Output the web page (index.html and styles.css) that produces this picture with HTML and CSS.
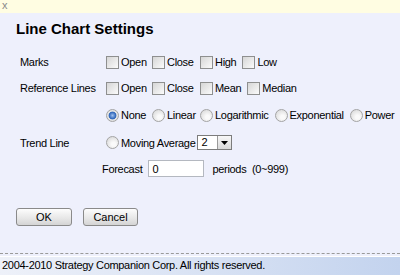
FILE: index.html
```html
<!DOCTYPE html>
<html lang="en">
<head>
  <meta charset="UTF-8">
  <title>Line Chart Settings</title>
  <link rel="stylesheet" href="styles.css">
</head>
<body>

  <div class="topbar">x</div>

  <main class="dialog">
    <h1>Line Chart Settings</h1>

    <div class="settings">
      <div class="label">Marks</div>
      <div class="options cols">
        <label class="opt"><input type="checkbox"><span>Open</span></label>
        <label class="opt"><input type="checkbox"><span>Close</span></label>
        <label class="opt"><input type="checkbox"><span>High</span></label>
        <label class="opt"><input type="checkbox"><span>Low</span></label>
      </div>

      <div class="label">Reference Lines</div>
      <div class="options cols">
        <label class="opt"><input type="checkbox"><span>Open</span></label>
        <label class="opt"><input type="checkbox"><span>Close</span></label>
        <label class="opt"><input type="checkbox"><span>Mean</span></label>
        <label class="opt"><input type="checkbox"><span>Median</span></label>
      </div>

      <div class="label"></div>
      <div class="options cols">
        <label class="opt"><input type="radio" name="trend" checked><span>None</span></label>
        <label class="opt"><input type="radio" name="trend"><span>Linear</span></label>
        <label class="opt"><input type="radio" name="trend"><span>Logarithmic</span></label>
        <label class="opt"><input type="radio" name="trend"><span>Exponential</span></label>
        <label class="opt"><input type="radio" name="trend"><span>Power</span></label>
      </div>

      <div class="label">Trend Line</div>
      <div class="options">
        <label class="opt opt-tight"><input type="radio" name="trend"><span>Moving Average</span></label>
        <div class="select">
          <span class="select-value">2</span>
          <span class="select-btn"><svg width="7" height="4" viewBox="0 0 7 4"><path d="M0 0h7L3.5 4z" fill="#000"/></svg></span>
        </div>
      </div>

      <div class="label"></div>
      <div class="forecast">
        <span>Forecast</span>
        <input type="text" class="text-input" value="0">
        <span class="hint">periods&nbsp;&nbsp;(0~999)</span>
      </div>
    </div>

    <div class="buttons">
      <button class="btn btn-ok">OK</button>
      <button class="btn btn-cancel">Cancel</button>
    </div>
  </main>

  <div class="divider"></div>
  <footer>2004-2010 Strategy Companion Corp. All rights reserved.</footer>

</body>
</html>
```

FILE: styles.css
```css
* { box-sizing: border-box; margin: 0; padding: 0; }

body {
  font-family: 'Liberation Sans', Arial, sans-serif;
  font-size: 11px;
  letter-spacing: -0.3px;
  color: #000;
  background: #eef0fc;
  height: 100vh;
  display: flex;
  flex-direction: column;
  overflow: hidden;
  white-space: nowrap;
}

.topbar {
  height: 13px;
  background: #fffde2;
  color: #8a8a8a;
  font-size: 11px;
  line-height: 11px;
  padding-left: 2px;
}

.dialog {
  padding: 0 16px;
}

h1 {
  font-size: 15px;
  font-weight: bold;
  letter-spacing: 0;
  line-height: 20px;
  margin-top: 6px;
  height: 20px;
}

.settings {
  display: grid;
  grid-template-columns: 86px auto;
  grid-template-rows: 26px 26px 28px 27px 25px;
  margin-top: 10px;
  padding-left: 4px;
  align-items: center;
}

.options {
  display: flex;
  align-items: center;
}

.opt {
  display: flex;
  align-items: center;
  margin-right: 6px;
}

.cols .opt:nth-child(1) { width: 46px; margin-right: 0; }
.cols .opt:nth-child(2) { width: 48px; margin-right: 0; }

.opt-tight { margin-right: 0; }

.opt span {
  margin-left: 2px;
}

input[type="checkbox"],
input[type="radio"] {
  appearance: none;
  -webkit-appearance: none;
  width: 13px;
  height: 13px;
  flex: none;
  border: 1px solid #8e8f8f;
  background: linear-gradient(135deg, #d6d6d6, #fbfbfb);
}

input[type="radio"] {
  border-radius: 50%;
  border-color: #a4a4a4;
  background: radial-gradient(circle at 60% 65%, #fafafa 20%, #dcdcdc 80%);
}

input[type="radio"]:checked {
  background: radial-gradient(circle at 50% 50%, #9fc0ee 0, #2a62b8 45%, #e6e6e6 55%, #dadada 100%);
}

.select {
  display: flex;
  width: 35px;
  height: 15px;
  background: #fff;
  border: 1px solid #7c7c7c;
  margin-left: 2px;
}

.select-value {
  flex: 1;
  padding-left: 3px;
  line-height: 13px;
}

.select-btn {
  width: 14px;
  display: flex;
  align-items: center;
  justify-content: center;
  background: linear-gradient(#f8f8f8, #d8d8d8);
  border-left: 1px solid #9a9a9a;
}

.forecast {
  display: flex;
  align-items: center;
  margin-left: -4px;
}

.text-input {
  width: 56px;
  height: 17px;
  margin-left: 6px;
  border: 1px solid #b4b8c0;
  background: #fff;
  font: inherit;
  padding-left: 3px;
}

.hint {
  margin-left: 8px;
}

.buttons {
  display: flex;
  gap: 11px;
  margin-top: 27px;
}

.btn {
  height: 18px;
  font: inherit;
  border: 1px solid #8a8a8a;
  border-radius: 3px;
  background: linear-gradient(#fdfdfd, #e6e6e6 60%, #d4d4d4);
  color: #000;
}

.btn-ok { width: 56px; }
.btn-cancel { width: 55px; }

.divider {
  margin-top: auto;
  border-top: 1px dashed #9a9a9a;
  height: 4px;
  border-bottom: 1px solid #fff;
}

footer {
  height: 18px;
  line-height: 17px;
  padding-left: 2px;
  background: linear-gradient(to right, #eef1f9, #c3d3ee);
  color: #000;
}
```
